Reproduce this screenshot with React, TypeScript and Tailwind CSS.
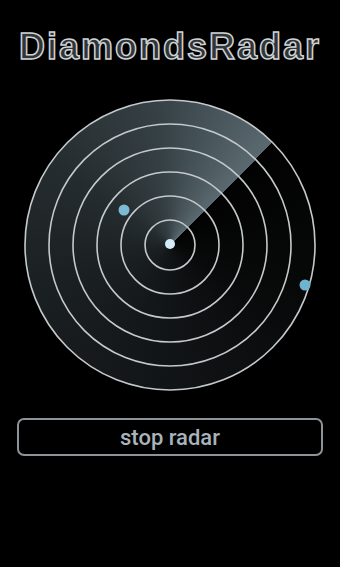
export default function App() {
  const rings = [25, 49, 73, 97, 121, 145];
  return (
    <div className="w-[340px] h-[567px] bg-black flex flex-col items-center overflow-hidden">
      <div className="pt-[29px] h-[65px] text-[36px] leading-[36px] font-bold tracking-[2px] text-[#303538] [-webkit-text-stroke:1.5px_#cfd3d5] font-['Liberation_Sans',Arial,sans-serif]">
        DiamondsRadar
      </div>
      <div className="relative mt-[32px] w-[296px] h-[296px]">
        <div className="absolute inset-[3px] rounded-full bg-[conic-gradient(from_45deg,#020202_0deg,#070808_60deg,#121517_140deg,#1b2022_210deg,#252c2f_260deg,#364145_310deg,#5a6970_360deg)]" />
        <svg className="absolute inset-0" width="296" height="296" viewBox="0 0 296 296">
          {rings.map((r) => (
            <circle key={r} cx="148" cy="148" r={r} fill="none" stroke="#c4c9cc" strokeWidth="1.6" />
          ))}
          <circle cx="148" cy="147" r="5" fill="#d4ecf7" />
          <circle cx="102" cy="113" r="5.5" fill="#7cbad3" />
          <circle cx="283" cy="188" r="5.5" fill="#6fb4cf" />
        </svg>
      </div>
      <button className="mt-[25px] w-[306px] h-[38px] rounded-[7px] border-2 border-[#8e9397] bg-black flex items-center justify-center text-[22px] font-medium text-[#a8b3bb] font-['Roboto',sans-serif]">
        stop radar
      </button>
    </div>
  );
}
